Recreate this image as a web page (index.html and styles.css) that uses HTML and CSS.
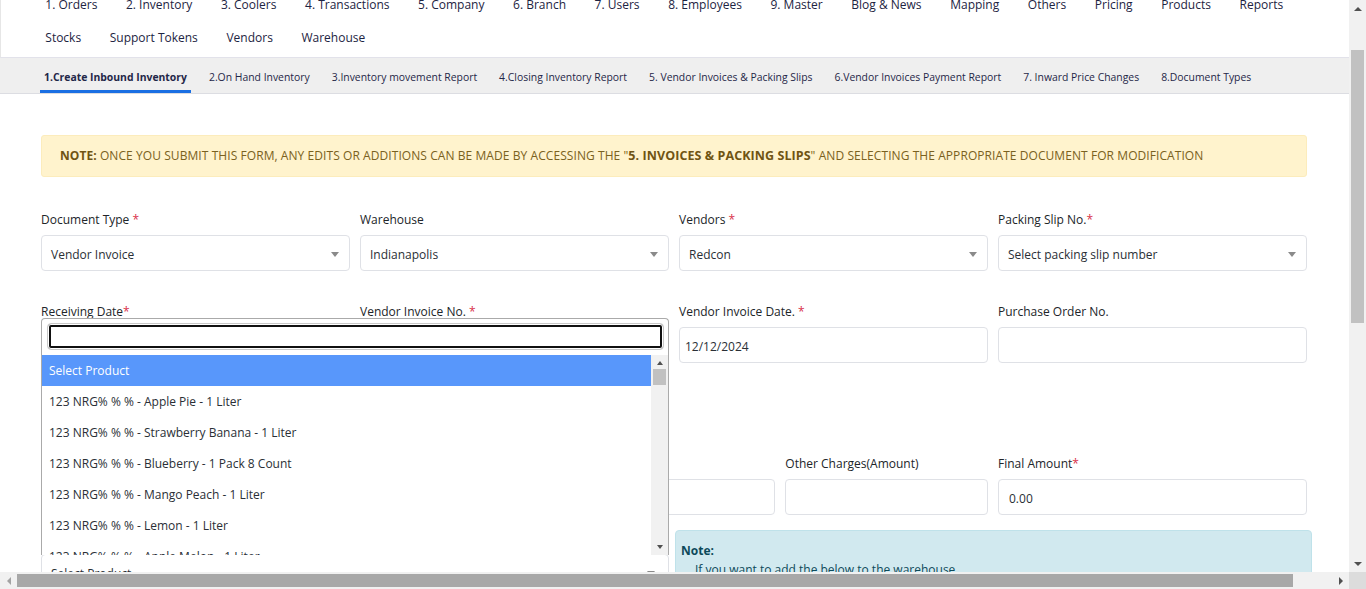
FILE: index.html
```html
<!DOCTYPE html>
<html lang="en">
<head>
<meta charset="utf-8">
<title>Create Inbound Inventory</title>
<link rel="stylesheet" href="styles.css">
</head>
<body>
<div class="screen">
  <div class="viewport">
    <div class="page">
      <nav class="topnav">
        <ul class="navrow">
          <li>1. Orders</li><li>2. Inventory</li><li>3. Coolers</li><li>4. Transactions</li><li>5. Company</li><li>6. Branch</li><li>7. Users</li><li>8. Employees</li><li>9. Master</li><li>Blog &amp; News</li><li>Mapping</li><li>Others</li><li>Pricing</li><li>Products</li><li>Reports</li>
        </ul>
        <ul class="navrow">
          <li>Stocks</li><li>Support Tokens</li><li>Vendors</li><li>Warehouse</li>
        </ul>
      </nav>
      <div class="tabs">
        <span class="tab active">1.Create Inbound Inventory</span>
        <span class="tab">2.On Hand Inventory</span>
        <span class="tab">3.Inventory movement Report</span>
        <span class="tab">4.Closing Inventory Report</span>
        <span class="tab">5. Vendor Invoices &amp; Packing Slips</span>
        <span class="tab">6.Vendor Invoices Payment Report</span>
        <span class="tab">7. Inward Price Changes</span>
        <span class="tab">8.Document Types</span>
      </div>
      <main class="content">
        <div class="alert-warn"><b>NOTE:</b> ONCE YOU SUBMIT THIS FORM, ANY EDITS OR ADDITIONS CAN BE MADE BY ACCESSING THE "<b class="big">5. INVOICES &amp; PACKING SLIPS</b>" AND SELECTING THE APPROPRIATE DOCUMENT FOR MODIFICATION</div>

        <div class="grid4 row1">
          <div class="field">
            <label>Document Type <span class="req">*</span></label>
            <div class="select"><span>Vendor Invoice</span><i class="caret"></i></div>
          </div>
          <div class="field">
            <label>Warehouse</label>
            <div class="select"><span>Indianapolis</span><i class="caret"></i></div>
          </div>
          <div class="field">
            <label>Vendors <span class="req">*</span></label>
            <div class="select"><span>Redcon</span><i class="caret"></i></div>
          </div>
          <div class="field">
            <label>Packing Slip No.<span class="req">*</span></label>
            <div class="select"><span>Select packing slip number</span><i class="caret"></i></div>
          </div>
        </div>

        <div class="grid4 row2">
          <div class="field">
            <label>Receiving Date<span class="req">*</span></label>
            <div class="input"></div>
          </div>
          <div class="field">
            <label>Vendor Invoice No. <span class="req">*</span></label>
            <div class="input"></div>
          </div>
          <div class="field">
            <label>Vendor Invoice Date. <span class="req">*</span></label>
            <div class="input tight">12/12/2024</div>
          </div>
          <div class="field">
            <label>Purchase Order No.</label>
            <div class="input"></div>
          </div>
        </div>

        <div class="grid5 row3">
          <div class="field">
            <label class="blank"></label>
            <div class="input"></div>
          </div>
          <div class="field">
            <label class="blank"></label>
            <div class="input"></div>
          </div>
          <div class="field">
            <label class="blank"></label>
            <div class="input"></div>
          </div>
          <div class="field">
            <label>Other Charges(Amount)</label>
            <div class="input"></div>
          </div>
          <div class="field">
            <label>Final Amount<span class="req">*</span></label>
            <div class="input">0.00</div>
          </div>
        </div>

        <div class="row4">
          <div class="field product">
            <label class="blank"></label>
            <div class="select prod-select"><span>Select Product</span><i class="caret"></i>
              <div class="dropdown">
                <div class="dd-search"><div class="dd-input"></div></div>
                <div class="dd-body">
                  <ul class="dd-list">
                    <li class="hl">Select Product</li>
                    <li>123 NRG% % % - Apple Pie - 1 Liter</li>
                    <li>123 NRG% % % - Strawberry Banana - 1 Liter</li>
                    <li>123 NRG% % % - Blueberry - 1 Pack 8 Count</li>
                    <li>123 NRG% % % - Mango Peach - 1 Liter</li>
                    <li>123 NRG% % % - Lemon - 1 Liter</li>
                    <li>123 NRG% % % - Apple Melon - 1 Liter</li>
                  </ul>
                  <div class="dd-scroll">
                    <i class="arr up dark"></i>
                    <div class="dd-track"><div class="dd-thumb"></div></div>
                    <i class="arr down dark"></i>
                  </div>
                </div>
              </div>
            </div>
          </div>
          <div class="alert-info">
            <div class="info-title">Note:</div>
            <div class="info-line">If you want to add the below to the warehouse</div>
          </div>
        </div>
      </main>
    </div>
  </div>
  <div class="vscroll">
    <div class="sb-btn"><i class="arr up dark"></i></div>
    <div class="vtrack"><div class="vthumb"></div></div>
    <div class="sb-btn"><i class="arr down dark"></i></div>
  </div>
  <div class="hscroll">
    <div class="sb-btn"><i class="arr left light"></i></div>
    <div class="htrack"><div class="hthumb"></div></div>
    <div class="sb-btn"><i class="arr right dark"></i></div>
  </div>
  <div class="corner"></div>
</div>
</body>
</html>
```

FILE: styles.css
```css
* { box-sizing: border-box; }
html, body { margin: 0; padding: 0; overflow: hidden; background: #fff; }
body { font-family: "Open Sans", "Noto Sans", sans-serif; font-size: 12px; color: #212529; }

.screen {
  width: 1366px; height: 589px;
  display: grid;
  grid-template-columns: 1349px 17px;
  grid-template-rows: 572px 17px;
}
.viewport { overflow: hidden; background: #fff; }
.page { margin-top: -12px; }

/* top navigation */
.topnav {
  background: #fff;
  border-left: 1px solid #e6e6e6;
  border-bottom: 1px solid #e2e2ea;
  padding: 0 0 2px 30px;
}
.navrow { list-style: none; margin: 0; padding: 0; display: flex; }
.navrow li { padding: 0 14.3px; line-height: 33px; color: #1d2442; font-size: 12px; white-space: nowrap; }
.navrow + .navrow li { line-height: 34px; }

/* tabs */
.tabs {
  display: flex; gap: 14px;
  height: 36px;
  background: #efefef;
  border-bottom: 1px solid #dcdde2;
  padding-left: 40px;
}
.tab {
  display: flex; align-items: center;
  padding: 5px 4px 0;
  border-bottom: 3px solid transparent;
  font-size: 10.4px; color: #1f2748; white-space: nowrap;
}
.tab.active { font-weight: 700; border-bottom-color: #1a6fe3; }

/* content */
.content { padding: 41px 42px 0 41px; }
.alert-warn {
  background: #fff3cd;
  border: 1px solid #fcecbc;
  border-radius: 3px;
  height: 42px;
  display: flex; align-items: center;
  padding-left: 18px;
  padding-bottom: 2px;
  color: #7a6120;
  font-size: 12px;
  letter-spacing: 0.07px;
  white-space: pre;
}
.alert-warn b { font-weight: 700; color: #6f5413; }
.alert-warn b.big { font-size: 12.5px; }

.grid4 { display: grid; grid-template-columns: repeat(4, 1fr); column-gap: 10px; }
.grid5 { display: grid; grid-template-columns: 309px 1fr 1fr 1fr 309px; column-gap: 10px; }
.row1 { margin-top: 34px; }
.row2 { margin-top: 32px; }
.row3 { margin-top: 92px; }

.field label { display: block; height: 17px; line-height: 17px; margin-bottom: 7px; color: #212529; font-size: 12px; }
.req { color: #d9304a; }

.select, .input {
  height: 36px;
  border: 1px solid #dfe1e6;
  border-radius: 4px;
  background: #fff;
  display: flex; align-items: center;
  padding: 2px 10px 0;
  color: #2a2f36;
  font-size: 12px;
}
.select { justify-content: space-between; padding-left: 9px; padding-right: 10px; }
.input.tight { padding-left: 5px; }
.caret {
  width: 0; height: 0;
  border-left: 4px solid transparent;
  border-right: 4px solid transparent;
  border-top: 5px solid #8a8a8a;
}

.row4 {
  margin-top: 15px; margin-right: -5px;
  display: grid; grid-template-columns: 628px 1fr; column-gap: 6px;
}
.prod-select { position: relative; padding-left: 9px; padding-right: 13px; }

/* select2 style dropdown opened above the product select */
.dropdown {
  position: absolute;
  left: -1px; right: -1px; bottom: 100%;
  height: 237px;
  background: #fff;
  border: 1px solid #aaa;
  border-bottom: none;
  border-radius: 4px 4px 0 0;
  display: flex; flex-direction: column;
  z-index: 5;
}
.dd-search { padding: 4px 4px 5px 5px; height: 36px; }
.dd-input {
  height: 27px;
  border: 1px solid #c8c8c8;
  border-radius: 4px;
  box-shadow: inset 0 0 0 1px #fff, inset 0 0 0 3px #111;
}
.dd-body { flex: 1; display: flex; overflow: hidden; }
.dd-list { list-style: none; margin: 0; padding: 0; flex: 1; overflow: hidden; }
.dd-list li { height: 31px; line-height: 31px; padding-left: 7px; color: #2a2f36; font-size: 12px; white-space: nowrap; }
.dd-list li.hl { background: #5897fb; color: #fff; }
.dd-scroll { width: 17px; background: #f1f1f1; display: flex; flex-direction: column; align-items: center; padding: 6px 0 6px; }
.dd-track { flex: 1; width: 100%; padding: 4px 2px 0; }
.dd-thumb { height: 16px; background: #c1c1c1; }

.alert-info {
  background: #d1e9ef;
  border: 1px solid #bfe2ea;
  border-radius: 4px;
  padding: 11px 5px 0;
  height: 60px;
  color: #0d4a5a;
  font-size: 12px;
}
.info-title { font-weight: 700; line-height: 17px; }
.info-line { padding-left: 14px; line-height: 22px; }

/* scrollbars */
.arr { display: block; width: 0; height: 0; }
.arr.up { border-left: 4px solid transparent; border-right: 4px solid transparent; border-bottom: 4px solid #505050; }
.arr.down { border-left: 4px solid transparent; border-right: 4px solid transparent; border-top: 4px solid #505050; }
.arr.right { border-top: 4px solid transparent; border-bottom: 4px solid transparent; border-left: 4px solid #505050; }
.arr.left { border-top: 4px solid transparent; border-bottom: 4px solid transparent; border-right: 4px solid #a3a3a3; }
.dd-scroll .arr.up, .dd-scroll .arr.down { border-left-width: 3.5px; border-right-width: 3.5px; }

.vscroll { background: #f1f1f1; display: flex; flex-direction: column; }
.hscroll { background: #f1f1f1; display: flex; }
.sb-btn { width: 17px; height: 17px; display: flex; align-items: center; justify-content: center; flex: none; }
.vtrack { flex: 1; padding: 33px 2px 0; }
.vthumb { height: 273px; background: #c1c1c1; }
.htrack { flex: 1; padding: 2px 0; }
.hthumb { width: 1276px; height: 13px; background: #a8a8a8; }
.corner { background: #dcdcdc; }
```
